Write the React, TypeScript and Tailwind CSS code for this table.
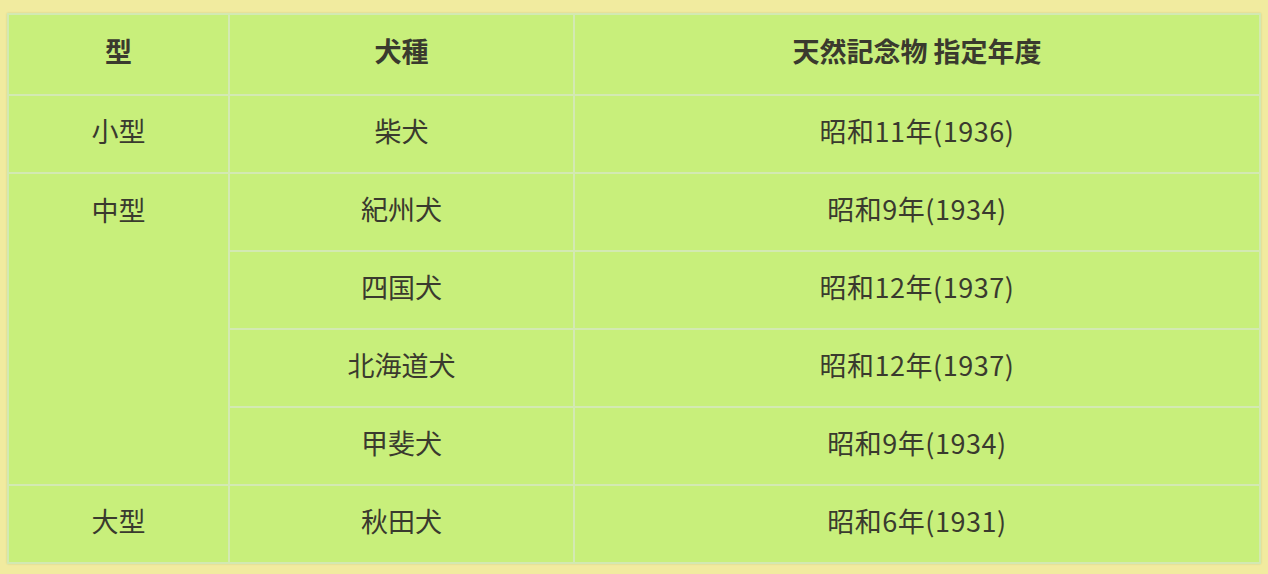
import React from "react";

const font = { fontFamily: '"Noto Sans CJK JP", "Noto Sans", sans-serif' };

export default function App() {
  const rows: { type?: string; span?: number; breed: string; year: string }[] = [
    { type: "小型", span: 1, breed: "柴犬", year: "昭和11年(1936)" },
    { type: "中型", span: 4, breed: "紀州犬", year: "昭和9年(1934)" },
    { breed: "四国犬", year: "昭和12年(1937)" },
    { breed: "北海道犬", year: "昭和12年(1937)" },
    { breed: "甲斐犬", year: "昭和9年(1934)" },
    { type: "大型", span: 1, breed: "秋田犬", year: "昭和6年(1931)" },
  ];
  const cell = "border-2 border-[#d3e9b2] text-center align-middle pb-[8px]";
  return (
    <div className="w-[1268px] h-[574px] bg-[#f1eb9f] pt-[13px] pl-[7px]" style={font}>
      <table className="w-[1254px] border-collapse bg-[#c8ef7b] text-[#3a3a2e] text-[27px] leading-none shadow-[0_0_2px_rgba(0,0,0,0.12)]">
        <colgroup>
          <col className="w-[221px]" />
          <col className="w-[345px]" />
          <col />
        </colgroup>
        <thead>
          <tr className="h-[81px]">
            <th className={`${cell} font-bold`}>型</th>
            <th className={`${cell} font-bold`}>犬種</th>
            <th className={`${cell} font-bold`}>天然記念物 指定年度</th>
          </tr>
        </thead>
        <tbody>
          {rows.map((r, i) => (
            <tr key={i} className="h-[78px]">
              {r.type && (
                <td
                  rowSpan={r.span}
                  className={`border-2 border-[#d3e9b2] text-center font-normal ${
                    r.span && r.span > 1 ? "align-top pt-[22px]" : "align-middle pb-[8px]"
                  }`}
                >
                  {r.type}
                </td>
              )}
              <td className={cell}>{r.breed}</td>
              <td className={`${cell} tracking-[0.02em]`}>{r.year}</td>
            </tr>
          ))}
        </tbody>
      </table>
    </div>
  );
}
